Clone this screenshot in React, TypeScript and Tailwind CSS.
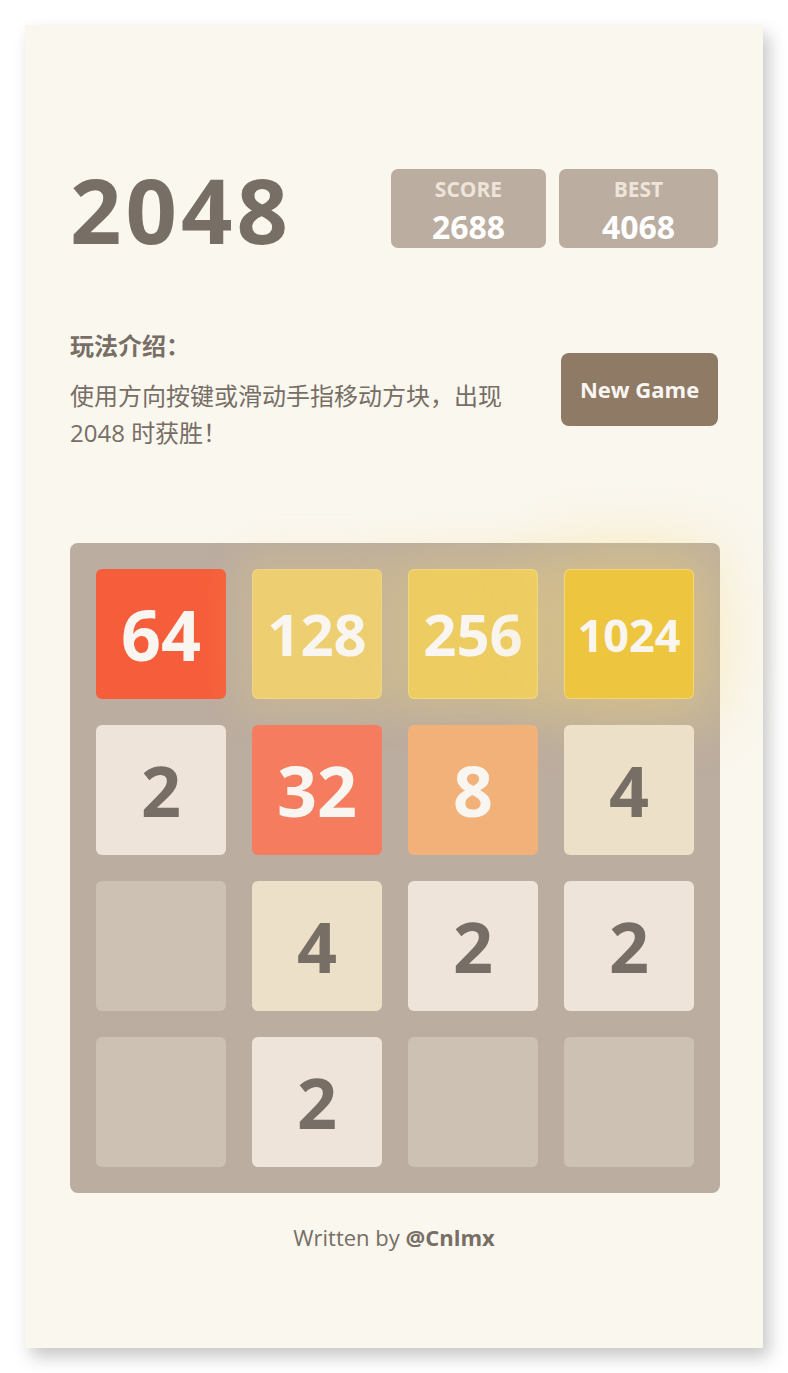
import React from "react";

type Tile = number | null;

const board: Tile[] = [
  64, 128, 256, 1024,
  2, 32, 8, 4,
  null, 4, 2, 2,
  null, 2, null, null,
];

// colour + text size per tile value
const tileStyle: Record<number, string> = {
  2: "bg-[#eee4da] text-[#776e65] text-[70px]",
  4: "bg-[#ede0c8] text-[#776e65] text-[70px]",
  8: "bg-[#f2b179] text-[#f9f6f2] text-[70px]",
  32: "bg-[#f67c5f] text-[#f9f6f2] text-[70px]",
  64: "bg-[#f65e3b] text-[#f9f6f2] text-[70px]",
  128: "bg-[#edcf72] text-[#f9f6f2] text-[58px] shadow-[0_0_40px_14px_rgba(243,215,116,0.24),inset_0_0_0_1px_rgba(255,255,255,0.14)]",
  256: "bg-[#edcc61] text-[#f9f6f2] text-[58px] shadow-[0_0_44px_16px_rgba(243,215,116,0.32),inset_0_0_0_1px_rgba(255,255,255,0.22)]",
  1024: "bg-[#edc53f] text-[#f9f6f2] text-[45px] shadow-[0_0_60px_22px_rgba(243,215,116,0.45),inset_0_0_0_1px_rgba(255,255,255,0.3)]",
};

function Cell({ value }: { value: Tile }) {
  if (value === null) {
    return <div className="w-[130px] h-[130px] rounded-[6px] bg-[#cdc1b4]" />;
  }
  return (
    <div
      className={`w-[130px] h-[130px] rounded-[6px] flex items-center justify-center font-bold leading-none ${tileStyle[value]}`}
    >
      {value}
    </div>
  );
}

function ScoreBox({ label, value, width }: { label: string; value: number; width: string }) {
  return (
    <div className={`${width} h-[79px] rounded-[7px] bg-[#bbada0] flex flex-col items-center pt-[6px]`}>
      <div className="text-[21px] font-bold leading-[28px] text-[#eee4da]">{label}</div>
      <div className="text-[32px] font-bold leading-[40px] mt-[4px] text-white">{value}</div>
    </div>
  );
}

export default function App() {
  return (
    <div className="w-full min-h-screen bg-white p-[25px]">
      {/* Card */}
      <div
        className="w-[738px] h-[1323px] bg-[#faf7ef] px-[45px] pt-[144px] shadow-[6px_9px_16px_rgba(0,0,0,0.22)] text-[#776e65]"
        style={{ fontFamily: '"Open Sans", "Noto Sans CJK SC", sans-serif' }}
      >
        {/* Header */}
        <div className="flex items-center justify-between h-[79px]">
          <h1 className="text-[90px] font-bold leading-none tracking-[4px]">2048</h1>
          <div className="flex gap-[13px]">
            <ScoreBox label="SCORE" value={2688} width="w-[155px]" />
            <ScoreBox label="BEST" value={4068} width="w-[159px]" />
          </div>
        </div>

        {/* Intro */}
        <div className="flex items-center justify-between mt-[80px]">
          <div className="w-[450px]">
            <div className="text-[24px] font-bold leading-[36px]">玩法介绍：</div>
            <p className="text-[24px] leading-[37px] mt-[13px]">
              使用方向按键或滑动手指移动方块，出现 2048 时获胜！
            </p>
          </div>
          <button className="w-[157px] h-[73px] rounded-[8px] bg-[#8f7a66] text-[#f9f6f2] text-[22px] font-bold">
            New Game
          </button>
        </div>

        {/* Board */}
        <div className="mt-[92px] w-[650px] h-[650px] rounded-[8px] bg-[#bbada0] p-[26px] grid grid-cols-4 gap-[26px]">
          {board.map((v, i) => (
            <Cell key={i} value={v} />
          ))}
        </div>

        {/* Footer */}
        <div className="mt-[29px] text-center text-[22px] leading-[30px]">
          Written by <span className="font-bold">@Cnlmx</span>
        </div>
      </div>
    </div>
  );
}
